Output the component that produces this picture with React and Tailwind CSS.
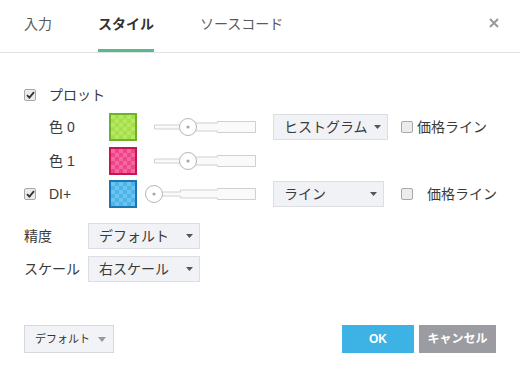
import React from 'react';

const FONT = { fontFamily: '"Liberation Sans", "Noto Sans CJK JP", sans-serif' };

function Check({ checked = false }) {
  return (
    <span className="flex h-[12px] w-[12px] items-center justify-center rounded-[2px] border border-[#a8a8a8] bg-[#ececec]">
      {checked && (
        <svg width="9" height="8" viewBox="0 0 9 8">
          <path d="M1 4.2 L3.4 6.6 L8 1.2" fill="none" stroke="#333" strokeWidth="1.8" />
        </svg>
      )}
    </span>
  );
}

function Arrow({ color = '#555', w = 7, h = 4 }) {
  return (
    <svg width={w} height={h} viewBox={`0 0 ${w} ${h}`}>
      <path d={`M0 0 L${w} 0 L${w / 2} ${h} Z`} fill={color} />
    </svg>
  );
}

function Select({ label, className = '' }) {
  return (
    <div className={`flex h-[26px] items-center justify-between border border-[#dcdee3] bg-[#f1f2f6] pl-[10px] pr-[6px] text-[14px] text-[#3a3a3a] ${className}`}>
      <span>{label}</span>
      <Arrow />
    </div>
  );
}

function Swatch({ id, fill, light, border }) {
  return (
    <div className="h-[28px] w-[28px]" style={{ border: `2px solid ${border}` }}>
      <svg width="24" height="24" viewBox="0 0 24 24">
        <defs>
          <pattern id={id} width="8" height="8" patternUnits="userSpaceOnUse">
            <rect width="8" height="8" fill={fill} />
            <rect width="4" height="4" fill={light} />
            <rect x="4" y="4" width="4" height="4" fill={light} />
          </pattern>
        </defs>
        <rect width="24" height="24" fill={`url(#${id})`} />
      </svg>
    </div>
  );
}

function Slider({ pos }) {
  return (
    <svg width="111" height="20" viewBox="0 0 111 20">
      <path
        d="M9.5 8 H35.5 V6 H72.5 V4.5 H110.5 V15.5 H72.5 V14 H35.5 V12 H9.5 Z"
        fill="#fafafa"
        stroke="#cfd0d3"
        strokeWidth="1"
      />
      <circle cx={pos} cy="10" r="8.5" fill="#fff" stroke="#b4b7bf" strokeWidth="1" />
      <circle cx={pos} cy="10" r="1.6" fill="#a5a8b0" />
    </svg>
  );
}

export default function App() {
  return (
    <div className="relative h-[378px] w-[520px] overflow-hidden bg-white text-[#3a3a3a]" style={FONT}>
      {/* tabs */}
      <div className="relative flex h-[53px] items-end border-b border-[#e0e1e4] pl-[24px] text-[14px]">
        <div className="flex h-[52px] items-center pb-[3px] text-[#5a5a5a]">入力</div>
        <div className="ml-[46px] flex h-[52px] items-center border-b-[3px] border-[#5bb88c] font-bold text-[#333]">スタイル</div>
        <div className="ml-[46px] flex h-[52px] items-center pb-[3px] text-[#5a5a5a]">ソースコード</div>
        <svg className="absolute right-[21px] top-[18px]" width="10" height="10" viewBox="0 0 10 10">
          <path d="M1 1 L9 9 M9 1 L1 9" stroke="#999" strokeWidth="2" />
        </svg>
      </div>

      <div className="flex flex-col pl-[24px] text-[14px]">
        <div className="mt-[30px] flex h-[24px] items-center">
          <Check checked />
          <span className="ml-[13px]">プロット</span>
        </div>

        <div className="mt-[6px] flex h-[28px] items-center">
          <span className="ml-[25px] w-[60px]">色 0</span>
          <Swatch id="c0" fill="#a3df45" light="#b6e867" border="#6cb32b" />
          <div className="ml-[8px]"><Slider pos={43} /></div>
          <Select label="ヒストグラム" className="ml-[17px] w-[115px]" />
          <div className="ml-[13px] flex items-center">
            <Check />
            <span className="ml-[4px]">価格ライン</span>
          </div>
        </div>

        <div className="mt-[6px] flex h-[28px] items-center">
          <span className="ml-[25px] w-[60px]">色 1</span>
          <Swatch id="c1" fill="#ef4489" light="#f3689f" border="#c6164f" />
          <div className="ml-[8px]"><Slider pos={43} /></div>
        </div>

        <div className="mt-[5px] flex h-[28px] items-center">
          <Check checked />
          <span className="ml-[13px] w-[60px]">DI+</span>
          <Swatch id="c2" fill="#4bb4e9" light="#6cc3ee" border="#1b76b3" />
          <div className="ml-[8px]"><Slider pos={9} /></div>
          <Select label="ライン" className="ml-[17px] w-[111px]" />
          <div className="ml-[17px] flex items-center">
            <Check />
            <span className="ml-[14px]">価格ライン</span>
          </div>
        </div>

        <div className="mt-[15px] flex h-[26px] items-center">
          <span className="w-[64px]">精度</span>
          <Select label="デフォルト" className="w-[112px]" />
        </div>

        <div className="mt-[7px] flex h-[26px] items-center">
          <span className="w-[64px]">スケール</span>
          <Select label="右スケール" className="w-[112px]" />
        </div>

        <div className="mt-[43px] flex h-[28px] items-center pr-[24px]">
          <div className="flex h-[28px] w-[90px] items-center border border-[#d6d8dd] bg-[#f2f3f6] pl-[10px] text-[11px] text-[#333]">
            <span>デフォルト</span>
            <span className="ml-[8px] flex"><Arrow color="#999" w={8} h={5} /></span>
          </div>
          <div className="ml-auto flex h-[28px] w-[72px] items-center justify-center bg-[#3cb3e4] text-[12px] font-bold text-white">OK</div>
          <div className="ml-[5px] flex h-[28px] w-[77px] items-center justify-center bg-[#9b9ca2] text-[12px] font-bold text-white">キャンセル</div>
        </div>
      </div>
    </div>
  );
}
